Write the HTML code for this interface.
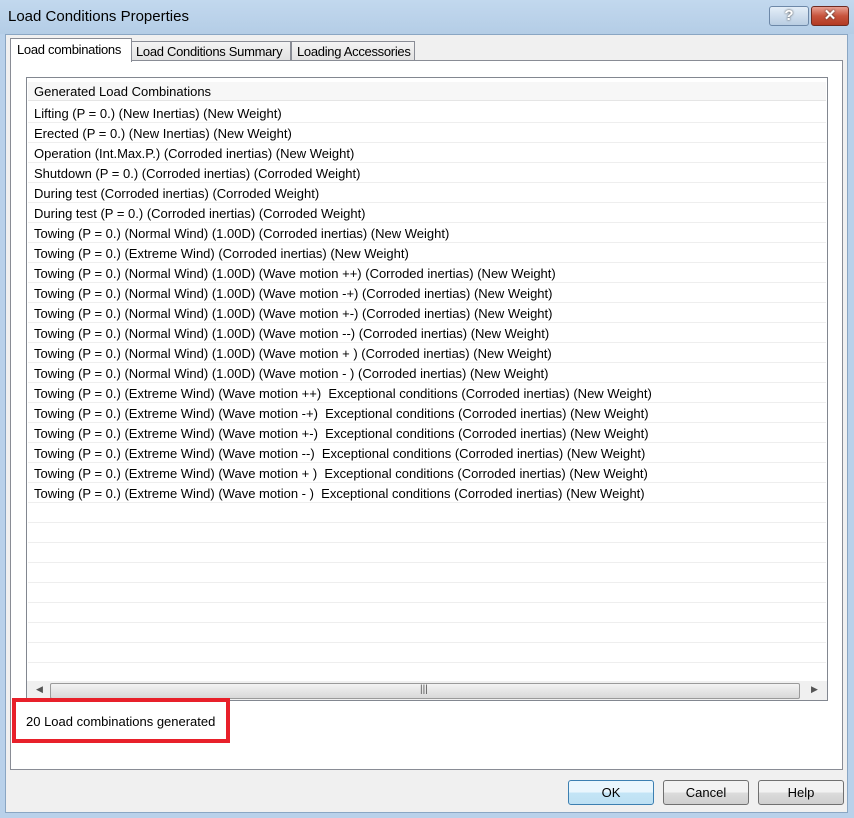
<!DOCTYPE html>
<html><head><meta charset="utf-8"><style>
*{box-sizing:border-box;margin:0;padding:0}
body{width:854px;height:818px;overflow:hidden;background:#b9d1ea;font-family:"Liberation Sans",sans-serif;font-size:13px;color:#000;position:relative}
.abs{position:absolute}
#title{left:0;top:0;width:854px;height:34px;background:linear-gradient(#c2d8ee,#b4cde6)}
#body{left:5px;top:34px;width:843px;height:779px;background:#f0f0f0;border:1px solid #8aa6c3}
.t{position:absolute;white-space:nowrap}
.row{position:absolute;left:28px;width:798px;height:20px;border-bottom:1px solid #eeeeee}
.row span{position:absolute;left:6px;top:3px;white-space:nowrap;font-size:13px}
.btn{position:absolute;top:780px;width:86px;height:25px;border:1px solid #707070;border-radius:3px;background:linear-gradient(#f2f2f2 50%,#dcdcdc 50%,#cfcfcf);text-align:center;line-height:23px}
</style></head><body>
<div class="abs" id="title"></div>
<div class="t" style="left:8px;top:8px;font-size:15px;color:#000">Load Conditions Properties</div>
<div class="abs" style="left:769px;top:6px;width:40px;height:20px;border:1px solid #6d88a8;border-radius:3px;background:linear-gradient(#e4eef8,#b9cde2);text-align:center;font-weight:bold;color:#fff;font-size:15px;line-height:18px;text-shadow:0 0 2px #333">?</div>
<div class="abs" style="left:811px;top:6px;width:38px;height:20px;border:1px solid #6e2a20;border-radius:3px;background:linear-gradient(#e8a193,#c7533d 50%,#b23a23);text-align:center;font-weight:bold;color:#fff;font-size:15px;line-height:18px;text-shadow:0 0 2px #333">✕</div>
<div class="abs" id="body"></div>
<div class="abs" style="left:10px;top:60px;width:833px;height:710px;background:#fff;border:1px solid #898c95"></div>
<div class="abs" style="left:131px;top:41px;width:160px;height:20px;background:linear-gradient(#f4f4f4,#e2e2e2);border:1px solid #898c95"></div>
<div class="t" style="left:136px;top:44px;letter-spacing:-0.3px">Load Conditions Summary</div>
<div class="abs" style="left:291px;top:41px;width:124px;height:20px;background:linear-gradient(#f4f4f4,#e2e2e2);border:1px solid #898c95"></div>
<div class="t" style="left:297px;top:44px;letter-spacing:-0.3px">Loading Accessories</div>
<div class="abs" style="left:10px;top:38px;width:122px;height:24px;background:#fff;border:1px solid #898c95;border-bottom:none"></div>
<div class="t" style="left:17px;top:42px;letter-spacing:-0.3px">Load combinations</div>
<div class="abs" style="left:26px;top:77px;width:802px;height:624px;border:1px solid #828790;background:#fff"></div>
<div class="abs" style="left:28px;top:82px;width:798px;height:19px;background:#f7f7f7;border-bottom:1px solid #e5e5e5"></div>
<div class="t" style="left:34px;top:84px">Generated Load Combinations</div>
<div id="rows"></div>
<div class="abs" style="left:27px;top:681px;width:800px;height:19px;background:#f0f0f0"></div>
<div class="abs" style="left:50px;top:683px;width:750px;height:16px;border:1px solid #9a9a9a;border-radius:2px;background:linear-gradient(#f3f3f3,#d8d8d8)"></div>
<div class="t" style="left:36px;top:684px;font-size:9px;color:#555">◀</div>
<div class="t" style="left:811px;top:684px;font-size:9px;color:#555">▶</div>
<div class="t" style="left:420px;top:684px;font-size:10px;color:#555">|||</div>
<div class="abs" style="left:12px;top:698px;width:218px;height:45px;border:4px solid #e8202a"></div>
<div class="t" style="left:26px;top:714px">20 Load combinations generated</div>
<div class="btn" style="left:568px;border-color:#3c7fb1;background:linear-gradient(#eaf6fd 50%,#c4e5f6 50%,#bde0f3)">OK</div>
<div class="btn" style="left:663px">Cancel</div>
<div class="btn" style="left:758px">Help</div>
<script>
var r=["Lifting (P = 0.) (New Inertias) (New Weight)","Erected (P = 0.) (New Inertias) (New Weight)","Operation (Int.Max.P.) (Corroded inertias) (New Weight)","Shutdown (P = 0.) (Corroded inertias) (Corroded Weight)","During test (Corroded inertias) (Corroded Weight)","During test (P = 0.) (Corroded inertias) (Corroded Weight)","Towing (P = 0.) (Normal Wind) (1.00D) (Corroded inertias) (New Weight)","Towing (P = 0.) (Extreme Wind) (Corroded inertias) (New Weight)","Towing (P = 0.) (Normal Wind) (1.00D) (Wave motion ++) (Corroded inertias) (New Weight)","Towing (P = 0.) (Normal Wind) (1.00D) (Wave motion -+) (Corroded inertias) (New Weight)","Towing (P = 0.) (Normal Wind) (1.00D) (Wave motion +-) (Corroded inertias) (New Weight)","Towing (P = 0.) (Normal Wind) (1.00D) (Wave motion --) (Corroded inertias) (New Weight)","Towing (P = 0.) (Normal Wind) (1.00D) (Wave motion + ) (Corroded inertias) (New Weight)","Towing (P = 0.) (Normal Wind) (1.00D) (Wave motion - ) (Corroded inertias) (New Weight)","Towing (P = 0.) (Extreme Wind) (Wave motion ++)  Exceptional conditions (Corroded inertias) (New Weight)","Towing (P = 0.) (Extreme Wind) (Wave motion -+)  Exceptional conditions (Corroded inertias) (New Weight)","Towing (P = 0.) (Extreme Wind) (Wave motion +-)  Exceptional conditions (Corroded inertias) (New Weight)","Towing (P = 0.) (Extreme Wind) (Wave motion --)  Exceptional conditions (Corroded inertias) (New Weight)","Towing (P = 0.) (Extreme Wind) (Wave motion + )  Exceptional conditions (Corroded inertias) (New Weight)","Towing (P = 0.) (Extreme Wind) (Wave motion - )  Exceptional conditions (Corroded inertias) (New Weight)"];
var h="";for(var i=0;i<29;i++){h+='<div class="row" style="top:'+(103+i*20)+'px"><span>'+(r[i]||"").replace(/  /g," &nbsp;")+'</span></div>';}
document.getElementById("rows").innerHTML=h;
</script>
</body></html>
